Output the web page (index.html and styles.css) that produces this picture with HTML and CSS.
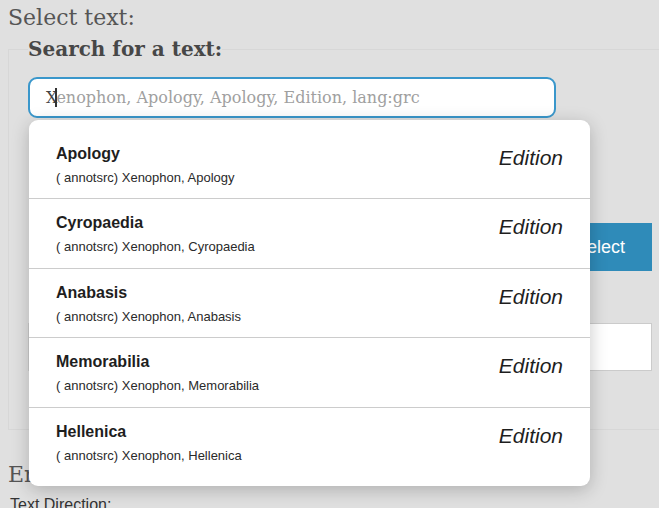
FILE: index.html
```html
<!DOCTYPE html>
<html>
<head>
<meta charset="utf-8">
<link rel="stylesheet" href="styles.css">
</head>
<body>
<div class="page">
  <div class="select-title">Select text:</div>
  <fieldset class="search-box">
    <legend class="search-legend">Search for a text:</legend>
    <div class="search-field">
      <div class="search-input">
        <span class="typed">X</span><span class="caret"></span><span class="hint">enophon, Apology, Apology, Edition, lang:grc</span>
      </div>
      <ul class="results">
        <li class="result">
          <div class="result-main">
            <div class="result-title">Apology</div>
            <div class="result-sub">( annotsrc) Xenophon, Apology</div>
          </div>
          <div class="result-kind">Edition</div>
        </li>
        <li class="result">
          <div class="result-main">
            <div class="result-title">Cyropaedia</div>
            <div class="result-sub">( annotsrc) Xenophon, Cyropaedia</div>
          </div>
          <div class="result-kind">Edition</div>
        </li>
        <li class="result">
          <div class="result-main">
            <div class="result-title">Anabasis</div>
            <div class="result-sub">( annotsrc) Xenophon, Anabasis</div>
          </div>
          <div class="result-kind">Edition</div>
        </li>
        <li class="result">
          <div class="result-main">
            <div class="result-title">Memorabilia</div>
            <div class="result-sub">( annotsrc) Xenophon, Memorabilia</div>
          </div>
          <div class="result-kind">Edition</div>
        </li>
        <li class="result">
          <div class="result-main">
            <div class="result-title">Hellenica</div>
            <div class="result-sub">( annotsrc) Xenophon, Hellenica</div>
          </div>
          <div class="result-kind">Edition</div>
        </li>
      </ul>
    </div>
    <div class="button-row">
      <button class="select-btn">Select</button>
    </div>
    <div class="urn-input"></div>
  </fieldset>
  <div class="enter-title">Enter text:</div>
  <div class="direction-label">Text Direction:</div>
</div>
</body>
</html>
```

FILE: styles.css
```css
html, body {
  margin: 0;
  padding: 0;
  background: #e0e0e0;
  overflow: hidden;
}

.page {
  width: 659px;
  height: 508px;
  overflow: hidden;
  padding: 5px 0 0 8px;
  box-sizing: border-box;
  font-family: "DejaVu Serif", serif;
  color: #555;
}

.select-title {
  font-size: 22px;
  line-height: 26px;
  color: #555;
}

.search-box {
  margin: 7px 0 0 0;
  width: 665px;
  box-sizing: border-box;
  border: 1px solid #d7d7d7;
  padding: 16px 20px 58px 19px;
  min-width: 0;
}

.search-legend {
  font-size: 20px;
  font-weight: bold;
  color: #474747;
  padding: 0;
  margin-left: 0;
  line-height: 23px;
}

.search-field {
  position: relative;
  width: 528px;
}

.search-input {
  height: 41px;
  box-sizing: border-box;
  border: 2px solid #3a97cb;
  border-radius: 9px;
  background: #fff;
  padding: 0 0 0 16px;
  display: flex;
  align-items: center;
  font-size: 16px;
  white-space: nowrap;
}

.typed {
  color: #444;
}

.caret {
  display: inline-block;
  width: 2px;
  height: 19px;
  background: #333;
  margin: 0 -1px 0 -2px;
}

.hint {
  color: #a0a0a0;
}

.results {
  position: absolute;
  top: 43px;
  left: 1px;
  width: 561px;
  margin: 0;
  padding: 10px 0;
  list-style: none;
  background: #fff;
  border-radius: 9px;
  box-shadow: 0 4px 18px rgba(0, 0, 0, 0.22);
  z-index: 5;
  font-family: "Liberation Sans", Arial, sans-serif;
  color: #222;
}

.result {
  display: flex;
  justify-content: space-between;
  align-items: flex-start;
  padding: 15px 27px 11.4px 27px;
  border-bottom: 1px solid #cccccc;
}

.result:last-child {
  border-bottom: none;
}

.result-title {
  font-size: 16px;
  font-weight: bold;
  line-height: 18px;
  margin-bottom: 6px;
  color: #1e1e1e;
}

.result-sub {
  font-size: 13px;
  line-height: 18px;
  color: #2a2a2a;
}

.result-kind {
  font-size: 21px;
  font-style: italic;
  line-height: 24px;
  margin-top: 1px;
  color: #1e1e1e;
}

.button-row {
  display: flex;
  justify-content: flex-end;
  margin-top: 105px;
}

.select-btn {
  height: 48px;
  padding: 0 27px;
  border: none;
  background: #2f8bb9;
  color: #fff;
  font-family: "Liberation Sans", Arial, sans-serif;
  font-size: 18px;
}

.urn-input {
  margin-top: 52px;
  height: 48px;
  box-sizing: border-box;
  border: 1px solid #cbcbcb;
  background: #fff;
}

.enter-title {
  margin-top: 32px;
  font-size: 22px;
  line-height: 26px;
  color: #555;
}

.direction-label {
  margin: 8px 0 0 2px;
  font-family: "Liberation Sans", Arial, sans-serif;
  font-size: 16px;
  line-height: 18px;
  color: #333;
}
```
